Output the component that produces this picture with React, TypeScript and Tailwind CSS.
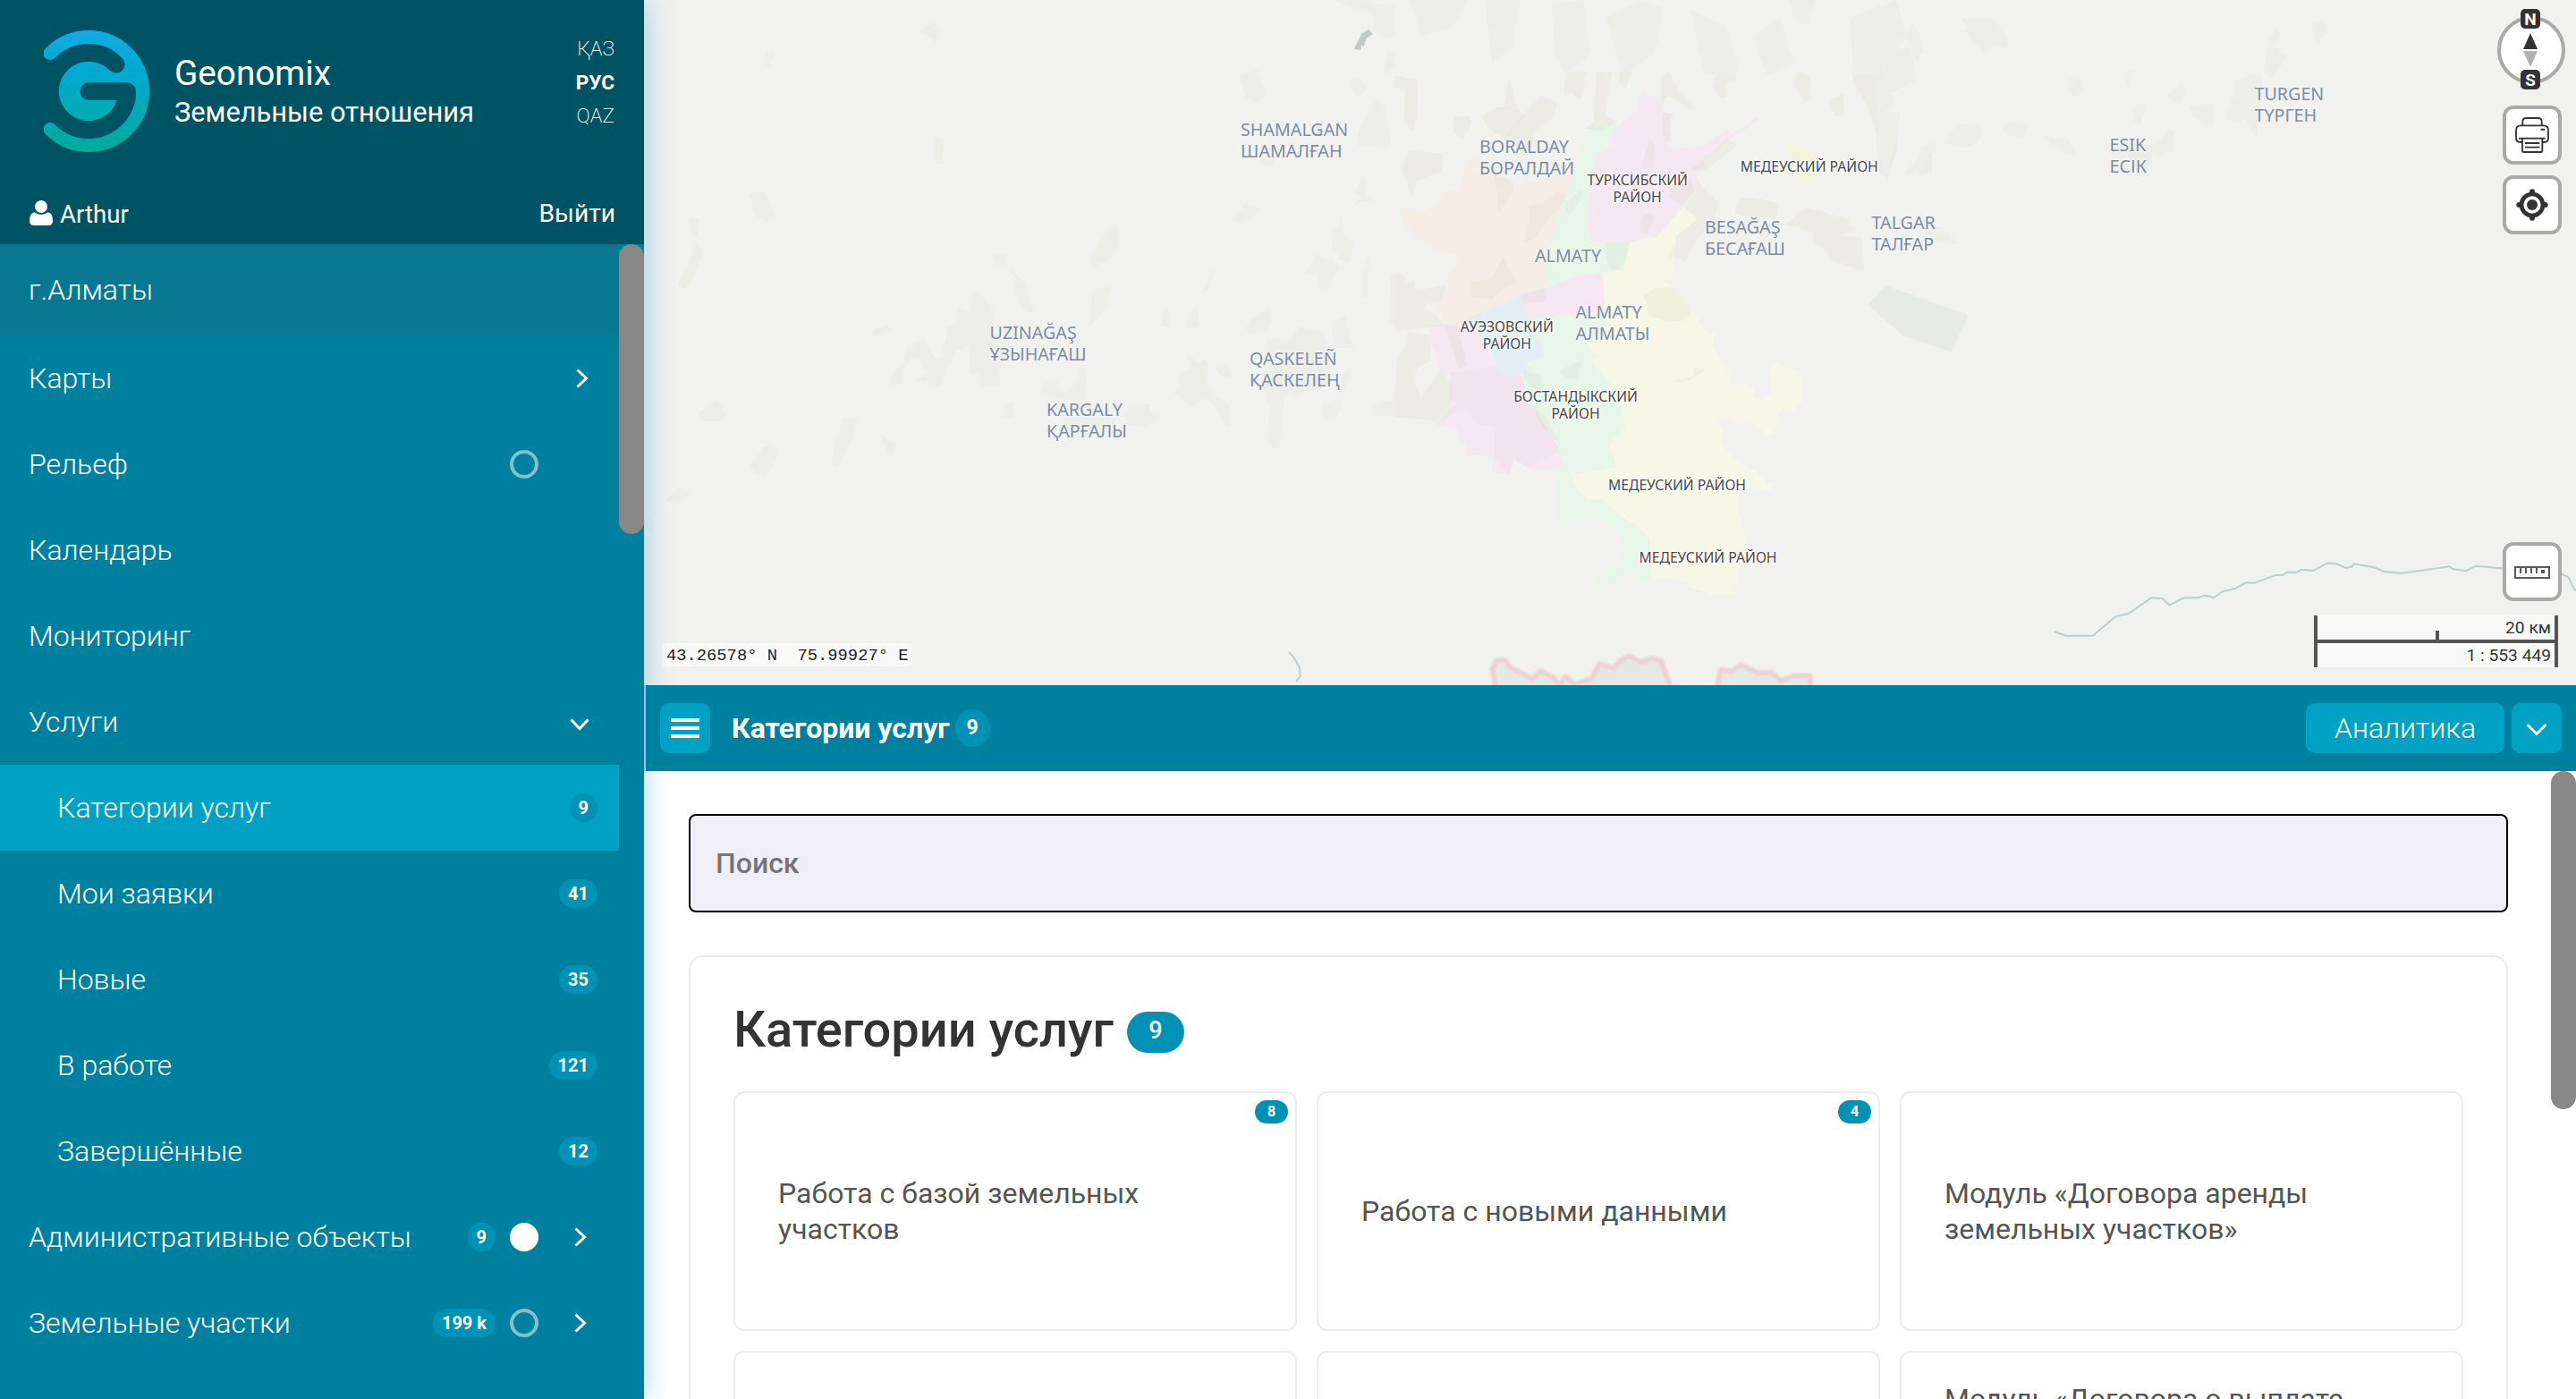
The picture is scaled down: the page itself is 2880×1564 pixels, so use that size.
import React from 'react';

/* ---------- sidebar ---------- */

function Logo() {
  return (
    <svg className="h-[136px] w-[118px] shrink-0" viewBox="49 34 118 136" fill="none">
      <defs>
        <linearGradient id="logo" gradientUnits="userSpaceOnUse" x1="99" y1="34" x2="99" y2="170">
          <stop offset="0" stopColor="#13aae3" />
          <stop offset="0.36" stopColor="#00aacf" />
          <stop offset="1" stopColor="#00ab99" />
        </linearGradient>
      </defs>
      <path d="M99 102 L129 50 A60 60 0 0 1 159 104 Z" fill="url(#logo)" />
      <path d="M56 59.5 A60.5 60.5 0 1 1 56 144.5" stroke="url(#logo)" strokeWidth="15" strokeLinecap="round" />
      <circle cx="99" cy="102" r="33.4" fill="url(#logo)" />
      <path d="M129.8 71.9 A43 43 0 1 0 140 115" stroke="#005363" strokeWidth="19.5" strokeLinecap="round" />
      <path d="M99.3 92.3 H142 Q152 93 152 103 Q152 111 149.7 118 L130.8 112 H99.3 A9.85 9.85 0 0 1 99.3 92.3 Z" fill="#005363" />
    </svg>
  );
}

function UserIcon() {
  return (
    <svg className="-mt-1 h-7 w-[26px]" viewBox="0 0 26 28" fill="#fff">
      <circle cx="13" cy="7" r="7" />
      <path d="M5.5 13.2 Q9 16 13 16 Q17 16 20.5 13.2 Q26 14 26 23 Q26 28 21 28 H5 Q0 28 0 23 Q0 14 5.5 13.2 Z" />
    </svg>
  );
}

function ChevronRight() {
  return (
    <svg className="h-[22px] w-[14px]" viewBox="0 0 14 22" fill="none" stroke="#fff" strokeWidth="3">
      <path d="M1.5 1.5 L11.5 11 L1.5 20.5" />
    </svg>
  );
}

function ChevronDown() {
  return (
    <svg className="h-[14px] w-[22px]" viewBox="0 0 22 14" fill="none" stroke="#fff" strokeWidth="3">
      <path d="M1.5 1.5 L11 11.5 L20.5 1.5" />
    </svg>
  );
}

type Item = {
  label: string;
  sub?: boolean;
  active?: boolean;
  badge?: string;
  toggle?: 'on' | 'off';
  arrow?: 'right' | 'down';
};

const items: Item[] = [
  { label: 'Карты', arrow: 'right' },
  { label: 'Рельеф', toggle: 'off' },
  { label: 'Календарь' },
  { label: 'Мониторинг' },
  { label: 'Услуги', arrow: 'down' },
  { label: 'Категории услуг', sub: true, active: true, badge: '9' },
  { label: 'Мои заявки', sub: true, badge: '41' },
  { label: 'Новые', sub: true, badge: '35' },
  { label: 'В работе', sub: true, badge: '121' },
  { label: 'Завершённые', sub: true, badge: '12' },
  { label: 'Административные объекты', badge: '9', toggle: 'on', arrow: 'right' },
  { label: 'Земельные участки', badge: '199 k', toggle: 'off', arrow: 'right' },
];

function NavRow({ item }: { item: Item }) {
  const { label, sub, active, badge, toggle, arrow } = item;
  return (
    <div
      className={
        'flex h-24 w-[692px] shrink-0 items-center pr-6 text-[32px] font-light text-white ' +
        (sub ? 'pl-16 ' : 'pl-8 ') +
        (active ? 'bg-[#00a1c3]' : '')
      }
    >
      <span className="grow whitespace-nowrap">{label}</span>
      {badge && (
        <span className="flex h-8 items-center rounded-full bg-[#0092b5] px-[10px] text-[20px] font-bold">{badge}</span>
      )}
      {toggle && (
        <span
          className={
            'ml-4 h-8 w-8 rounded-full ' +
            (toggle === 'on' ? 'bg-white ' : 'border-4 border-white/50 ') +
            (arrow ? 'mr-[40px]' : 'mr-[66px]')
          }
        />
      )}
      {arrow === 'right' && (
        <span className={toggle ? 'mr-[12px]' : 'mr-[10px]'}>
          <ChevronRight />
        </span>
      )}
      {arrow === 'down' && (
        <span className="mr-[9px] mt-[6px]">
          <ChevronDown />
        </span>
      )}
    </div>
  );
}

function Sidebar() {
  return (
    <aside className="relative z-10 flex h-full w-[720px] shrink-0 flex-col bg-[#00809f] shadow-[0_0_30px_rgba(0,140,210,0.36)]">
      <header className="flex h-[273px] shrink-0 flex-col bg-[#005363] text-white">
        <div className="flex pl-[49px] pr-[33px] pt-[34px]">
          <Logo />
          <div className="ml-[28px] mt-6 grow whitespace-nowrap">
            <div className="text-[38.7px] leading-[48px]">Geonomix</div>
            <div className="text-[30.8px] leading-[40px]">Земельные отношения</div>
          </div>
          <div className="mt-[2px] text-right text-[22.6px] font-extralight leading-[37.5px]">
            <div>ҚАЗ</div>
            <div className="font-bold">РУС</div>
            <div>QAZ</div>
          </div>
        </div>
        <div className="mt-[50px] flex h-10 items-center pl-[33px] pr-8 leading-10">
          <UserIcon />
          <span className="ml-2 text-[27.6px]">Arthur</span>
          <span className="-mt-[2px] ml-auto text-[28.2px]">Выйти</span>
        </div>
      </header>
      <div className="relative grow overflow-hidden">
        <div className="flex h-[102px] w-[692px] items-center bg-[#077890] pl-8 text-[32px] font-light text-white">
          г.Алматы
        </div>
        {items.map((it) => (
          <NavRow key={it.label} item={it} />
        ))}
        <div className="absolute right-0 top-0 h-[324px] w-7 rounded-full bg-[#888]" />
      </div>
    </aside>
  );
}

/* ---------- map ---------- */

const places = [
  { x: 1387, y: 152.3, t: ['SHAMALGAN', 'ШАМАЛҒАН'] },
  { x: 1106.5, y: 378.7, t: ['UZINAĞAŞ', 'ҰЗЫНАҒАШ'] },
  { x: 1397, y: 408, t: ['QASKELEÑ', 'ҚАСКЕЛЕҢ'] },
  { x: 1170, y: 465, t: ['KARGALY', 'ҚАРҒАЛЫ'] },
  { x: 1654, y: 170.5, t: ['BORALDAY', 'БОРАЛДАЙ'] },
  { x: 1716, y: 292.8, t: ['ALMATY'] },
  { x: 1761.5, y: 355.6, t: ['ALMATY', 'АЛМАТЫ'] },
  { x: 1906, y: 261, t: ['BESAĞAŞ', 'БЕСАҒАШ'] },
  { x: 2092.5, y: 255.6, t: ['TALGAR', 'ТАЛҒАР'] },
  { x: 2358.5, y: 168.7, t: ['ESIK', 'ЕСІК'] },
  { x: 2520.5, y: 112, t: ['TURGEN', 'ТҮРГЕН'] },
];

const districts = [
  { x: 1830.7, y: 207, t: ['ТУРКСИБСКИЙ', 'РАЙОН'] },
  { x: 2022.8, y: 192, t: ['МЕДЕУСКИЙ РАЙОН'] },
  { x: 1684.8, y: 370.5, t: ['АУЭЗОВСКИЙ', 'РАЙОН'] },
  { x: 1761.5, y: 448.7, t: ['БОСТАНДЫКСКИЙ', 'РАЙОН'] },
  { x: 1875, y: 548, t: ['МЕДЕУСКИЙ РАЙОН'] },
  { x: 1909.5, y: 628.7, t: ['МЕДЕУСКИЙ РАЙОН'] },
];

const westParcels = [
  '605,74 623,100 609,144 592,118 570,108',
  '254,180 274,172 263,228 247,210',
  '607,458 627,462 623,549 607,549',
  '218,649 254,641 275,737 254,744 233,727',
  '90,731 116,732 112,795 102,795',
  '109,811 125,847 101,940 85,972 71,957',
  '728,852 760,853 755,887 735,891',
  '973,757 989,746 991,822 982,857 940,895 926,873',
  '762,895 797,955 814,1050 791,1042 772,970 778,940',
  '936,971 973,960 967,1035 928,1098',
  '1192,886 1180,970 1163,988',
  '1243,250 1280,232 1299,318 1277,342 1256,330',
  '1473,263 1498,266 1510,300 1489,326 1474,290',
  '1527,335 1549,365 1559,490 1535,497 1491,487 1490,445',
  '1255,685 1290,699 1275,725 1242,748 1226,738',
  '1500,582 1507,610 1506,652 1530,682 1500,675 1480,690 1497,660 1484,645',
  '1455,717 1458,775 1481,822 1472,889 1447,862 1458,835 1437,849 1435,767 1449,769',
  '1403,855 1437,868 1453,900 1436,932 1432,969 1404,966 1408,908 1397,923 1383,914',
  '1515,835 1508,998 1499,995 1501,910',
  '1437,0 1500,0 1530,14 1568,16 1568,122 1548,128 1521,105 1523,65 1508,32 1480,26',
  '1555,170 1568,180 1568,220 1547,251 1545,215',
  '686,974 698,974 734,1045 728,1110 760,1140 768,1160 742,1240 742,1296 701,1296 701,1254 679,1254 678,1155 650,1180 630,1240 620,1295 595,1302 595,1273 560,1284 590,1250 575,1205 560,1200 540,1240 540,1285 509,1294 520,1245 542,1215 550,1157 584,1132 606,1200 622,1195 634,1100 650,1085 656,1033 681,1043',
  '510,1083 512,1107 484,1129 471,1114',
  '1090,1024 1101,1104 1077,1090',
  '1156,1019 1160,1098 1130,1100 1137,1053',
  '1302,1032 1312,1062 1302,1109 1266,1118 1255,1104 1268,1069',
  '1301,1130 1345,1142 1368,1095 1414,1115 1432,1170 1440,1210 1430,1290 1355,1332 1338,1322 1325,1507 1311,1505 1299,1465 1306,1370 1290,1280 1295,1200',
  '1465,1052 1475,1140 1482,1166 1441,1166 1434,1080',
  '1475,1230 1477,1262 1452,1332 1455,1260',
  '1416,1350 1456,1342 1446,1410 1415,1408',
  '1132,1186 1157,1215 1170,1203 1181,1235 1173,1265 1195,1330 1221,1356 1226,1434 1212,1425 1186,1350 1168,1336 1145,1366 1106,1315 1115,1300 1115,1256 1140,1237',
  '1220,1220 1227,1260 1211,1274 1193,1237',
  '905,1236 924,1238 920,1345 890,1345 823,1323 840,1277 866,1273 859,1295 878,1317 900,1285',
  '752,1348 771,1352 773,1398 752,1398',
  '1014,1360 1054,1356 1060,1384 1077,1386 1074,1410 1050,1428 1014,1428 1006,1400',
  '875,1400 985,1405 983,1420 935,1440 920,1480 900,1465 875,1420',
  '152,1342 170,1382 170,1413 116,1413 116,1382',
  '415,1403 445,1401 438,1468 420,1520 405,1560 391,1560 399,1540 396,1488',
  '262,1479 281,1515 270,1560 225,1560 240,1535',
  '493,1458 529,1490 512,1541',
  '1558,920 1568,915 1568,1085 1556,1080',
  '1519,1360 1568,1340 1568,1395 1519,1395',
  '1290,530 1318,532 1312,558 1280,550',
];

const cityParcels = [
  '0,12 62,25 67,95 55,175 25,150 27,52 0,48',
  '330,15 355,105 318,108',
  '425,72 474,92 457,140 395,180 418,205 370,250 330,180 345,165 370,130',
  '252,130 300,104 355,108 380,130 340,170 330,205 270,165',
  '172,133 220,130 218,160 195,198 170,175',
  '38,230 140,240 135,290 60,320 48,365 20,285',
  '497,0 560,0 540,85 515,60 492,70',
  '588,0 633,0 613,128 650,145 600,175 555,165 580,145',
  '655,0 690,0 672,50 655,35',
  '775,20 800,0 830,60 880,108 855,110 815,80 795,70 775,105',
  '945,0 990,0 1000,28 960,35 965,75 945,75 925,40',
  '1175,0 1210,15 1217,80 1195,88 1165,35',
  '1268,85 1308,62 1312,125 1285,132',
  '1335,0 1510,0 1518,28 1450,60 1445,88 1410,95 1415,118 1473,122 1465,230 1440,315 1412,290 1405,180 1378,100 1340,30',
  '1545,222 1568,215 1568,295 1488,302 1520,265',
  '970,195 1000,215 905,290 862,288 920,240',
  '882,320 942,382 930,440 880,490 850,555 798,540 820,500 820,480 880,430 845,395 880,345',
  '1005,368 1055,370 1120,385 1115,430 1020,420 993,415',
  '1140,445 1200,395 1248,410 1275,418 1320,430 1338,465 1290,480 1362,485 1370,583 1268,550 1265,525 1220,500 1220,470',
  '0,590 22,592 30,622 55,605 58,640 152,622 130,670 88,680 82,700 120,710 140,742 0,760',
  '35,760 100,770 105,845 65,862 52,905 75,950 102,915 130,870 160,905 165,990 115,1020 0,1010 0,930 5,840 30,800',
  '288,305 342,318 345,350 300,410 295,350',
  '470,348 498,358 480,400 440,440 405,490 375,500 390,440 390,390 430,385',
  '500,380 545,345 550,360 510,420 498,400',
  '218,615 280,605 315,540 355,615 310,638 280,665 220,660',
  '740,200 760,215 750,282 720,280',
  '780,120 812,125 800,150 805,200 785,210',
  '805,345 862,310 875,350 840,392 800,370',
  '715,430 745,410 758,418 740,475 715,470',
  '612,500 685,498 670,560 640,585 618,560',
  '372,650 440,632 440,670 372,680',
  '726,655 755,633 815,630 868,700 850,725 795,732 742,715',
  '478,875 545,843 530,900 500,895',
  '375,875 425,888 430,920 410,935 375,900',
  '400,975 440,1010 482,1090 430,1040',
  '145,742 180,740 210,860 185,870',
  '810,908 868,890 875,862 907,872 860,900',
];

const eastParcels = [
  '105,8 137,72 144,112 119,148 88,64',
  '260,0 368,0 374,24 406,64 402,108 370,90 332,120 265,40 280,38',
  '37,115 94,95 112,140 116,215 38,245 53,292 20,315 68,318 60,410 37,480 33,541 0,520 0,215 8,212',
  '595,205 627,197 644,240 622,265 590,248',
  '764,186 798,173 786,240',
  '951,212 964,252 946,285 902,265',
  '810,285 843,300 818,358 802,350 791,305',
  '970,298 1053,287 1047,366 1023,365 980,323',
  '1118,208 1195,182 1207,240 1190,340 1183,405 1147,337 1126,351 1084,333 1110,260',
  '1247,32 1259,60 1240,97 1283,127 1230,205 1206,180 1218,85',
  '1352,20 1390,13 1411,36 1373,89',
  '202,420 252,358 310,353 330,387 305,422 270,435',
  '389,368 413,347 468,357 459,409 393,387',
  '528,396 595,408 623,459 595,459 523,409',
  '134,434 178,416 184,449 162,452 136,528 81,523 118,480',
  '850,425 887,408 906,372 927,382 925,442 880,466 858,458 845,500 835,536 800,510 780,460 770,470 735,470 718,420',
  '186,700 212,712 252,759 183,755 148,718',
];

const northParcels = [
  '1575,0 1640,0 1625,30 1590,40',
  '1660,0 1700,0 1690,55 1668,70',
  '1735,5 1770,0 1778,60 1750,84 1738,60',
  '1795,20 1835,0 1860,10 1850,60 1815,84',
  '1890,10 1930,30 1945,80 1905,84',
  '1960,40 1990,20 2005,70 1975,84',
  '2000,0 2030,0 2022,28 2006,22',
  '2068,20 2120,0 2132,40 2100,84 2072,84',
];

function Poly({ list }: { list: string[] }) {
  return (
    <>
      {list.map((p, i) => (
        <polygon key={i} points={p} />
      ))}
    </>
  );
}

function MapDrawing() {
  return (
    <svg className="absolute left-0 top-0 h-[766px] w-[2160px]" viewBox="720 0 2160 766">
      <g transform="translate(1560 80) scale(0.38265)">
        <polygon
          fill="#f6eee6"
          points="205,285 222,252 250,258 350,330 520,300 535,290 500,360 465,480 440,580 437,632 375,640 330,672 215,718 180,740 145,740 118,675 155,640 147,605 180,570 183,545 155,530 140,542 60,485 48,460 32,458 15,408 55,400 70,412 130,385 140,352 187,348"
        />
        <polygon
          fill="#e7f6e9"
          points="555,165 600,150 660,150 655,165 632,190 628,220 590,240 572,300 563,465 577,495 687,498 668,580 605,588 525,597 437,632 436,570 460,480 500,360 540,240"
        />
        <polygon
          fill="#f6e8f1"
          points="705,115 710,82 727,57 742,70 772,75 774,100 788,105 780,122 812,125 800,150 803,225 895,220 965,173 988,182 1058,132 1064,138 985,192 900,260 905,282 875,290 890,320 820,430 762,485 740,480 685,497 577,497 563,465 568,320 590,240 628,222 632,192 665,145"
        />
        <polygon fill="#f6e8f1" points="372,642 437,634 525,597 605,588 613,680 590,706 480,712 392,725 380,700" />
        <polygon
          fill="#e7f6e9"
          points="392,725 480,712 560,706 615,700 620,780 560,800 580,820 575,840 620,880 655,950 675,1040 625,1090 648,1155 520,1175 530,1215 605,1248 660,1300 710,1330 738,1360 745,1475 730,1490 670,1465 603,1525 580,1490 650,1440 668,1390 655,1345 582,1305 520,1325 500,1337 477,1315 475,1235 460,1160 490,1150 478,1105 430,1030 385,960 372,890 390,850 432,835 430,800 410,775"
        />
        <polygon
          fill="#f6f7e6"
          points="668,580 687,498 762,485 840,395 882,430 820,485 808,605 785,610 815,632 870,700 905,755 932,770 928,805 955,850 975,880 978,915 1020,910 1050,925 1045,950 1070,962 1095,940 1092,870 1112,850 1180,875 1192,920 1185,965 1155,1000 1120,992 1108,1060 1085,1062 1045,1025 1000,1030 970,1012 943,1020 958,1050 950,1085 1000,1140 1060,1170 1085,1205 1115,1198 1090,1225 1030,1215 1000,1230 1000,1270 1025,1370 1008,1440 990,1525 930,1530 860,1505 850,1490 750,1475 742,1365 710,1330 660,1300 605,1250 560,1250 530,1215 510,1165 530,1178 648,1155 625,1090 672,1040 655,950 620,900 570,840 595,840 560,800 620,780 605,588"
        />
        <polygon
          fill="#f6e8f1"
          points="98,745 180,735 215,718 250,780 300,870 372,888 385,960 435,1030 478,1105 492,1150 455,1162 390,1160 345,1130 335,1178 280,1168 285,1130 260,1120 210,1122 210,1082 185,1080 180,1045 118,1030 165,990 160,890 130,875 120,830 105,800"
        />
        <polygon
          fill="#f1e4ec"
          points="160,880 290,860 372,890 385,960 435,1030 478,1105 478,1110 385,1156 345,1130 335,1176 305,1150 290,1125 288,1040 240,1030 205,985 170,1000 118,1030 185,965 160,960"
        />
        <polygon
          fill="#e5eff3"
          points="212,718 330,672 372,645 375,690 392,725 412,775 428,800 432,835 385,850 390,880 335,893 300,870 275,805 250,780"
        />
        <polygon fill="#f2f3de" points="1140,205 1180,212 1235,240 1240,310 1190,337 1162,310 1150,240" />
        <polygon fill="#e7eae7" points="1435,626 1675,711 1624,820 1485,772 1380,680" />
        <g fill="rgb(180 170 140 / 0.085)">
          <Poly list={cityParcels} />
        </g>
      </g>
      <g fill="#edeee9">
        <g transform="translate(720 0) scale(0.5357 0.3333)">
          <Poly list={westParcels} />
        </g>
        <g transform="translate(2100 20) scale(0.3571 0.3333)">
          <Poly list={eastParcels} />
        </g>
        <Poly list={northParcels} />
        <g transform="translate(720 500) scale(0.8673 0.3333)">
          <polygon points="155,0 168,0 174,18 158,101 142,90 137,66" />
          <polygon points="246,0 263,0 248,67 241,60" />
          <polygon points="310,0 324,0 316,42" />
          <polygon points="47,132 61,152 46,190 28,178" />
          <polygon points="8,216 15,310 2,272" />
        </g>
      </g>
      <g transform="translate(720 0) scale(0.5357 0.3333)">
        <polygon fill="#c3c9c9" points="1512,98 1521,115 1508,128 1502,156 1497,150 1496,168 1482,164 1498,112" />
      </g>
      <g transform="translate(2280 580) scale(0.38265 0.3333)" fill="none" stroke="#bccdd2" strokeWidth="2">
        <path
          vectorEffect="non-scaling-stroke"
          d="M44 379 L78 392 H156 L222 328 L260 318 L327 265 L360 268 L380 290 L422 265 H463 L484 257 L511 264 L534 244 L570 235 L604 214 L628 215 L690 189 H711 L724 179 L752 180 L766 170 L800 174 L841 149 L868 151 L896 165 L914 160 L919 151 L978 163 L1007 177 L1058 183 L1199 160 L1207 168 L1247 175 L1276 158 L1364 167 L1515 180 L1546 196 L1562 235 L1570 242"
        />
      </g>
      <g transform="translate(720 500) scale(0.8673 0.3333)" strokeLinejoin="round">
        <path vectorEffect="non-scaling-stroke" fill="none" stroke="#bccdd2" strokeWidth="2" d="M831 687 L838 705 L845 740 L846 768 L841 785" />
        {[
          '1095,830 1097,790 1094,745 1099,718 1109,714 1118,742 1130,758 1145,778 1156,752 1173,775 1179,805 1188,770 1200,797 1222,775 1232,728 1250,742 1261,712 1270,702 1285,722 1299,710 1311,718 1322,800 1324,830',
          '1382,830 1384,800 1388,747 1402,752 1414,732 1436,758 1454,757 1466,785 1482,768 1503,768 1504,830',
        ].map((p) => (
          <g key={p}>
            <polygon vectorEffect="non-scaling-stroke" points={p} fill="#e5e8e5" stroke="#efdfe0" strokeWidth="8" />
            <polygon vectorEffect="non-scaling-stroke" points={p} fill="none" stroke="#e9d3d5" strokeWidth="4" />
          </g>
        ))}
      </g>
    </svg>
  );
}

function MapLabels() {
  return (
    <>
      {places.map((p) => (
        <div
          key={p.x}
          className="absolute whitespace-nowrap font-['Noto_Sans'] text-[19.7px] leading-6 text-[#7e8c9c] [text-shadow:0_0_3px_#f4f4f2,0_0_3px_#f4f4f2]"
          style={{ left: p.x - 720, top: p.y - 19 }}
        >
          {p.t.map((l) => (
            <div key={l}>{l}</div>
          ))}
        </div>
      ))}
      {districts.map((d) => (
        <div
          key={d.x}
          className="absolute -translate-x-1/2 whitespace-nowrap text-center font-['Noto_Sans'] text-[15.7px] leading-[19px] text-[#484848] [text-shadow:0_0_2px_#fff,0_0_3px_#fff,0_0_4px_#fff]"
          style={{ left: d.x - 720, top: d.y - 14.8 }}
        >
          {d.t.map((l) => (
            <div key={l}>{l}</div>
          ))}
        </div>
      ))}
    </>
  );
}

function MapTools() {
  const box = 'flex items-center justify-center rounded-[12px] border-4 border-[#a9a9a7] bg-white h-[66px] w-[66px]';
  return (
    <>
      <div className="absolute right-3 top-[10px] flex w-[76px] flex-col items-center">
        <div className="relative mt-2 h-[76px] w-[76px] rounded-full border-4 border-[#a9a9a7] bg-white">
          <span className="absolute -top-[12px] left-[22px] flex h-[22px] w-[22px] items-center justify-center rounded-[5px] bg-[#333] text-[19px] font-bold leading-none text-white">
            N
          </span>
          <span className="absolute left-[22px] top-[56px] flex h-[22px] w-[22px] items-center justify-center rounded-[5px] bg-[#333] text-[19px] font-bold leading-none text-white">
            S
          </span>
          <svg className="absolute left-[25px] top-[15px] h-[38px] w-4" viewBox="0 0 16 38">
            <path d="M8 0 L16 18 H0 Z" fill="#333" />
            <path d="M8 38 L16 20 H0 Z" fill="#b1b1b1" />
          </svg>
        </div>
      </div>
      <div className="absolute right-4 top-[118px] flex flex-col gap-3">
        <div className={box}>
          <svg className="h-[58px] w-[58px]" viewBox="726 366 174 174" fill="none" stroke="#333" strokeWidth="5.5">
            <path d="M781 420 V408 Q781 396 793 396 H833 Q845 396 845 408 V420" />
            <path d="M780 477 H774 Q759 477 759 462 V437 Q759 421 775 421 H851 Q867 421 867 437 V462 Q867 477 853 477 H847" />
            <path d="M768 464 H857" />
            <path d="M780 464 V505 Q780 510 785 510 H842 Q847 510 847 505 V464" />
            <path d="M789 480 H838 M789 494 H838" />
            <path d="M844 434 H853" strokeWidth="6" strokeLinecap="round" />
          </svg>
        </div>
        <div className={box}>
          <svg className="h-[58px] w-[58px]" viewBox="726 600 174 174" fill="#333">
            <circle cx="813" cy="687" r="36" fill="none" stroke="#333" strokeWidth="14" />
            <circle cx="813" cy="687" r="18" />
            <circle cx="813" cy="643" r="9" />
            <circle cx="813" cy="731" r="9" />
            <circle cx="769" cy="687" r="9" />
            <circle cx="857" cy="687" r="9" />
          </svg>
        </div>
      </div>
      <div className={box + ' absolute right-4 top-[606px]'}>
        <svg className="mt-[2px] h-[14px] w-10" viewBox="0 0 40 14" fill="none" stroke="#5a5a5a" strokeWidth="2">
          <rect x="1" y="1" width="38" height="12" />
          <path d="M7 2 V8 M13 2 V8 M19 2 V8 M25 2 V8" />
          <rect x="30" y="4" width="4" height="4" fill="#5a5a5a" stroke="none" />
        </svg>
      </div>
      <div className="absolute right-5 top-[688px] flex h-[58px] w-[273px] flex-col border-x-4 border-[#555] bg-white/60 text-right text-[19.2px] leading-[27px] text-[#333] [text-shadow:0_0_3px_#fff]">
        <div className="relative h-[31px] border-b-4 border-[#555] pr-1">
          20 км
          <span className="absolute bottom-0 left-[132px] h-[10px] w-1 bg-[#555]" />
        </div>
        <div className="pr-1">1 : 553 449</div>
      </div>
      <div className="absolute left-5 top-[719px] flex h-[26px] w-[279px] items-center whitespace-pre rounded bg-white/60 pl-[5px] pt-[2px] font-['Liberation_Mono'] text-[18.8px] text-[#222] [text-shadow:0_0_3px_#fff]">
        {'43.26578° N  75.99927° E'}
      </div>
    </>
  );
}

/* ---------- content ---------- */

function Toolbar() {
  return (
    <div className="relative z-20 flex h-24 shrink-0 items-center border-l-2 border-[#9dbcf5] bg-[#00809f] pl-4 pr-4 text-white">
      <button className="flex h-14 w-14 flex-col items-center justify-center gap-[5px] rounded-[10px] bg-[#00a1c3]">
        <span className="h-1 w-8 bg-white" />
        <span className="h-1 w-8 bg-white" />
        <span className="h-1 w-8 bg-white" />
      </button>
      <h1 className="ml-6 text-[32px] font-bold">Категории услуг</h1>
      <span className="ml-[6px] flex h-[42px] w-[39px] items-center justify-center rounded-full bg-[#0092b5] text-[23px] font-bold">
        9
      </span>
      <button className="ml-auto flex h-14 w-[222px] items-center justify-center rounded-[10px] bg-[#00a1c3] text-[32px] font-light">
        Аналитика
      </button>
      <button className="ml-2 flex h-14 w-14 items-center justify-center rounded-[10px] bg-[#00a1c3]">
        <svg className="mt-1 h-[14px] w-6" viewBox="0 0 24 14" fill="none" stroke="#fff" strokeWidth="3" strokeLinecap="round">
          <path d="M2.5 2 L12 11.5 L21.5 2" />
        </svg>
      </button>
    </div>
  );
}

function Card({ text, badge, top }: { text?: string; badge?: string; top?: boolean }) {
  return (
    <div
      className={
        'relative flex h-[268px] rounded-[12px] border-2 border-[#ededed] px-12 text-[32px] leading-10 text-[#555] ' +
        (top ? 'items-start pt-8' : 'items-center')
      }
    >
      {badge && (
        <span className="absolute right-2 top-2 flex h-[26px] w-[37px] items-center justify-center rounded-full bg-[#0092b5] text-[16px] font-bold leading-none text-white">
          {badge}
        </span>
      )}
      {text}
    </div>
  );
}

function Content() {
  return (
    <div className="relative flex grow overflow-hidden bg-white">
      <div className="flex w-[2084px] flex-col pl-[50px] pt-12">
        <div className="flex h-[110px] shrink-0 items-center rounded-lg border-2 border-black bg-[#f0eff5] pl-7 text-[32px] font-medium text-[#757575]">
          Поиск
        </div>
        <section className="mt-12 shrink-0 rounded-2xl border-2 border-[#ebebeb] px-12 pb-12">
          <div className="flex h-[150px] items-center">
            <h2 className="mt-[12px] text-[56px] font-medium leading-[66px] text-[#333]">Категории услуг</h2>
            <span className="ml-[15px] mt-[18px] flex h-[46px] w-16 items-center justify-center rounded-full bg-[#0092b5] pb-[3px] text-[27px] font-medium text-white">
              9
            </span>
          </div>
          <div className="grid grid-cols-3 gap-[22px]">
            <Card text="Работа с базой земельных участков" badge="8" />
            <Card text="Работа с новыми данными" badge="4" />
            <Card text="Модуль «Договора аренды земельных участков»" />
            <Card />
            <Card />
            <Card text="Модуль «Договора о выплате" top />
          </div>
        </section>
      </div>
      <div className="ml-auto h-[378px] w-7 rounded-full bg-[#888]" />
    </div>
  );
}

export default function App() {
  return (
    <div className="flex h-[1564px] w-[2880px] overflow-hidden font-[Roboto,sans-serif]">
      <Sidebar />
      <main className="flex w-[2160px] flex-col">
        <div className="relative h-[766px] shrink-0 overflow-hidden bg-[#f1f1ef]">
          <MapDrawing />
          <MapLabels />
          <MapTools />
        </div>
        <Toolbar />
        <Content />
      </main>
    </div>
  );
}
